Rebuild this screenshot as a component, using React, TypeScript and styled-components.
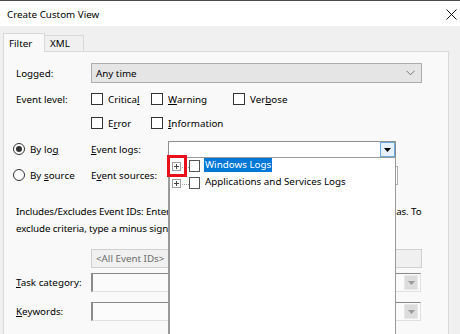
import styled, { createGlobalStyle } from 'styled-components';

const GlobalStyle = createGlobalStyle`
  html, body {
    margin: 0;
    padding: 0;
    background: #f0f0f0;
  }
  body {
    font-family: "Noto Sans", "Open Sans", sans-serif;
    font-size: 9.8px;
    color: #000;
  }
`;

const Arrow = ({ color }: { color: string }) => (
  <svg width="7" height="4" viewBox="0 0 7 4">
    <path d="M0 0H7L3.5 4Z" fill={color} />
  </svg>
);

const App = () => {
  return (
    <>
      <GlobalStyle />
      <Window>
        <TitleBar>
          <Title>Create Custom View</Title>
          <svg width="11" height="11" viewBox="0 0 11 11">
            <path d="M0.5 0.5L10.5 10.5M10.5 0.5L0.5 10.5" stroke="#111" strokeWidth="1" />
          </svg>
        </TitleBar>

        <Body>
          <TabStrip>
            <Tab $active>Filter</Tab>
            <Tab>XML</Tab>
          </TabStrip>

          <Panel>
            <FieldRow>
              <Label>Logged:</Label>
              <Combo $variant='gray'>
                <span>Any time</span>
                <svg width="9" height="6" viewBox="0 0 9 6">
                  <path d="M0.5 0.8L4.5 4.8L8.5 0.8" fill="none" stroke="#777" strokeWidth="1" />
                </svg>
              </Combo>
            </FieldRow>

            <LevelRow $first>
              <Label>Event level:</Label>
              <CheckItem $width={60}>
                <CheckBox />
                <span>
                  Critica<u>l</u>
                </span>
              </CheckItem>
              <CheckItem $width={82}>
                <CheckBox />
                <span>
                  <u>W</u>arning
                </span>
              </CheckItem>
              <CheckItem>
                <CheckBox />
                <span>
                  Ver<u>b</u>ose
                </span>
              </CheckItem>
            </LevelRow>
            <LevelRow>
              <Label />
              <CheckItem $width={60}>
                <CheckBox />
                <span>
                  E<u>r</u>ror
                </span>
              </CheckItem>
              <CheckItem>
                <CheckBox />
                <span>
                  <u>I</u>nformation
                </span>
              </CheckItem>
            </LevelRow>

            <SourceRow $first>
              <RadioItem>
                <Radio $checked />
                <span>
                  By lo<u>g</u>
                </span>
              </RadioItem>
              <SourceLabel>
                <u>E</u>vent logs:
              </SourceLabel>
              <LogCombo>
                <DropButton>
                  <Arrow color='#000' />
                </DropButton>
                <TreePopup>
                  <TreeItem>
                    <Expander />
                    <TreeCheck />
                    <TreeText $selected>Windows Logs</TreeText>
                    <Highlight />
                  </TreeItem>
                  <TreeItem>
                    <Expander />
                    <TreeCheck />
                    <TreeText>Applications and Services Logs</TreeText>
                  </TreeItem>
                </TreePopup>
              </LogCombo>
            </SourceRow>
            <SourceRow>
              <RadioItem>
                <Radio />
                <span>
                  By <u>s</u>ource
                </span>
              </RadioItem>
              <SourceLabel>
                E<u>v</u>ent sources:
              </SourceLabel>
              <SourcesCombo />
            </SourceRow>

            <HelpText>
              <HelpLine>
                Includes/Excludes Event IDs: Enter ID numbers and/or ID ranges separated by commas. To
              </HelpLine>
              <HelpLine>exclude criteria, type a minus sign first. For example 1,3,5-99,-76</HelpLine>
            </HelpText>

            <FieldRow $gap={12}>
              <Label />
              <IdInput>&lt;All Event IDs&gt;</IdInput>
            </FieldRow>

            <FieldRow $gap={5}>
              <Label>
                <u>T</u>ask category:
              </Label>
              <Combo $variant='disabled'>
                <span />
                <SmallDrop>
                  <Arrow color='#9a9a9a' />
                </SmallDrop>
              </Combo>
            </FieldRow>

            <FieldRow $gap={10}>
              <Label>
                <u>K</u>eywords:
              </Label>
              <Combo $variant='disabled'>
                <span />
                <SmallDrop>
                  <Arrow color='#9a9a9a' />
                </SmallDrop>
              </Combo>
            </FieldRow>
          </Panel>
        </Body>
      </Window>
    </>
  );
};

export default App;

const Window = styled.div`
  width: 460px;
  height: 334px;
  box-sizing: border-box;
  overflow: hidden;
  display: flex;
  flex-direction: column;
  border-top: 1px solid #4a4a4a;
  background: #f0f0f0;
`;

const TitleBar = styled.div`
  flex-shrink: 0;
  height: 25px;
  display: flex;
  align-items: center;
  justify-content: space-between;
  padding: 1px 3px 0 7px;
  box-sizing: border-box;
  background: #fff;
`;

const Title = styled.span`
  font-size: 9.8px;
`;

const Body = styled.div`
  flex: 1;
  min-height: 0;
  display: flex;
  flex-direction: column;
  padding: 7px 11px 0 3px;
`;

const TabStrip = styled.div`
  display: flex;
  align-items: flex-end;
  height: 19px;
  margin-bottom: -1px;
  position: relative;
  z-index: 1;
`;

const Tab = styled.div<{ $active?: boolean }>`
  box-sizing: border-box;
  display: flex;
  align-items: center;
  height: ${(p) => (p.$active ? 19 : 17)}px;
  width: ${(p) => (p.$active ? 42 : 39)}px;
  padding-left: 5px;
  background: ${(p) => (p.$active ? '#f9f9f9' : '#f0f0f0')};
  border: 1px solid #d9d9d9;
  border-bottom: ${(p) => (p.$active ? 'none' : '1px solid #d9d9d9')};
  ${(p) => !p.$active && 'border-left: none;'}
`;

const Panel = styled.div`
  flex: 1;
  display: flex;
  flex-direction: column;
  padding: 11px 26px 0 12px;
  background: #f9f9f9;
  border: 1px solid #d9d9d9;
  border-bottom: none;
`;

const FieldRow = styled.div<{ $gap?: number }>`
  display: grid;
  grid-template-columns: 75px 1fr;
  align-items: center;
  margin-top: ${(p) => p.$gap ?? 0}px;
`;

const Label = styled.span`
  white-space: nowrap;
`;

const Combo = styled.div<{ $variant: 'gray' | 'disabled' }>`
  box-sizing: border-box;
  height: ${(p) => (p.$variant === 'gray' ? 20 : 19)}px;
  display: flex;
  align-items: center;
  justify-content: space-between;
  padding: ${(p) => (p.$variant === 'gray' ? '0 6px 0 4px' : '0 2px 0 0')};
  background: ${(p) => (p.$variant === 'gray' ? '#e5e5e5' : '#fbfbfb')};
  border: 1px solid ${(p) => (p.$variant === 'gray' ? '#adadad' : '#e0e0e0')};
  ${(p) =>
    p.$variant === 'disabled' &&
    'border-top: 1px solid #8a8a8a; border-left: 2px solid #8a8a8a; width: 330px;'}
`;

const SmallDrop = styled.div`
  box-sizing: border-box;
  width: 14px;
  height: 15px;
  display: flex;
  align-items: center;
  justify-content: center;
  background: #dcdcdc;
  border: 1px solid #e8e8e8;
`;

const LevelRow = styled.div<{ $first?: boolean }>`
  display: flex;
  align-items: center;
  height: 24px;
  margin-top: ${(p) => (p.$first ? 4 : 0)}px;

  & > ${Label} {
    width: 75px;
  }
`;

const CheckItem = styled.label<{ $width?: number }>`
  display: flex;
  align-items: center;
  gap: 5px;
  white-space: nowrap;
  ${(p) => (p.$width ? `width: ${p.$width}px;` : '')}
`;

const CheckBox = styled.span`
  box-sizing: border-box;
  width: 12px;
  height: 12px;
  background: #fff;
  border: 1px solid #333;
`;

const SourceRow = styled.div<{ $first?: boolean }>`
  display: flex;
  align-items: center;
  height: 26px;
  margin-left: -3px;
  margin-top: ${(p) => (p.$first ? 1 : 0)}px;
`;

const RadioItem = styled.div`
  width: 78px;
  display: flex;
  align-items: center;
  gap: 5px;
  white-space: nowrap;
`;

const Radio = styled.span<{ $checked?: boolean }>`
  box-sizing: border-box;
  width: 12px;
  height: 12px;
  border-radius: 50%;
  border: 1px solid #333;
  background: #fff;
  display: flex;
  align-items: center;
  justify-content: center;

  &::after {
    content: '';
    width: 6px;
    height: 6px;
    border-radius: 50%;
    background: ${(p) => (p.$checked ? '#333' : 'transparent')};
  }
`;

const SourceLabel = styled.span`
  width: 77px;
  white-space: nowrap;
`;

const LogCombo = styled.div`
  position: relative;
  box-sizing: border-box;
  width: 228px;
  height: 17px;
  margin-top: 1px;
  display: flex;
  justify-content: flex-end;
  align-items: center;
  background: #fff;
  border: 1px solid #8e8e8e;
  border-bottom: none;
  z-index: 2;
`;

const DropButton = styled.div`
  box-sizing: border-box;
  width: 15px;
  height: 15px;
  margin-top: -1px;
  display: flex;
  align-items: center;
  justify-content: center;
  background: #e5f1fb;
  border: 1px solid #6aa9e6;
`;

const TreePopup = styled.div`
  position: absolute;
  top: 15px;
  left: -1px;
  box-sizing: border-box;
  width: 228px;
  height: 200px;
  display: flex;
  flex-direction: column;
  gap: 3px;
  background: #fff;
  border-left: 2px solid #9a9a9a;
  border-right: 1px solid #9a9a9a;
  border-top: 1px solid #9a9a9a;
`;

const TreeItem = styled.div`
  position: relative;
  display: flex;
  align-items: center;
  height: 14px;
  padding-left: 2px;
`;

const Expander = styled.span`
  box-sizing: border-box;
  position: relative;
  width: 9px;
  height: 9px;
  margin-top: 3px;
  margin-right: 1px;
  border: 1px solid #a0a0a0;
  background: #fff;

  &::before {
    content: '';
    position: absolute;
    left: 1px;
    top: 3px;
    width: 5px;
    height: 1px;
    background: #444;
  }
  &::after {
    content: '';
    position: absolute;
    left: 3px;
    top: 1px;
    width: 1px;
    height: 5px;
    background: #444;
  }
`;

const TreeCheck = styled.span`
  box-sizing: border-box;
  position: relative;
  width: 11px;
  height: 12px;
  margin-left: 7px;
  margin-right: 4px;
  margin-top: 1px;
  border: 1px solid #555;
  background: #fff;

  &::before {
    content: '';
    position: absolute;
    left: -8px;
    top: 6px;
    width: 7px;
    border-top: 1px dotted #a0a0a0;
  }
`;

const TreeText = styled.span<{ $selected?: boolean }>`
  padding: 0 1px;
  line-height: 14px;
  white-space: nowrap;
  color: ${(p) => (p.$selected ? '#fff' : '#000')};
  background: ${(p) => (p.$selected ? '#0078d7' : 'transparent')};
`;

const Highlight = styled.span`
  position: absolute;
  left: -3px;
  top: -3px;
  width: 20px;
  height: 22px;
  box-sizing: border-box;
  border: 3px solid #e8101c;
`;

const SourcesCombo = styled.div`
  box-sizing: border-box;
  width: 230px;
  height: 19px;
  background: #fff;
  border: 1px solid #adadad;
`;

const HelpText = styled.div`
  margin-top: 15px;
  line-height: 17px;
`;

const HelpLine = styled.div`
  white-space: nowrap;
  letter-spacing: -0.12px;
`;

const IdInput = styled.div`
  box-sizing: border-box;
  height: 19px;
  padding-left: 4px;
  display: flex;
  align-items: center;
  color: #6d6d6d;
  background: #f0f0f0;
  border: 1px solid #d0d0d0;
`;
